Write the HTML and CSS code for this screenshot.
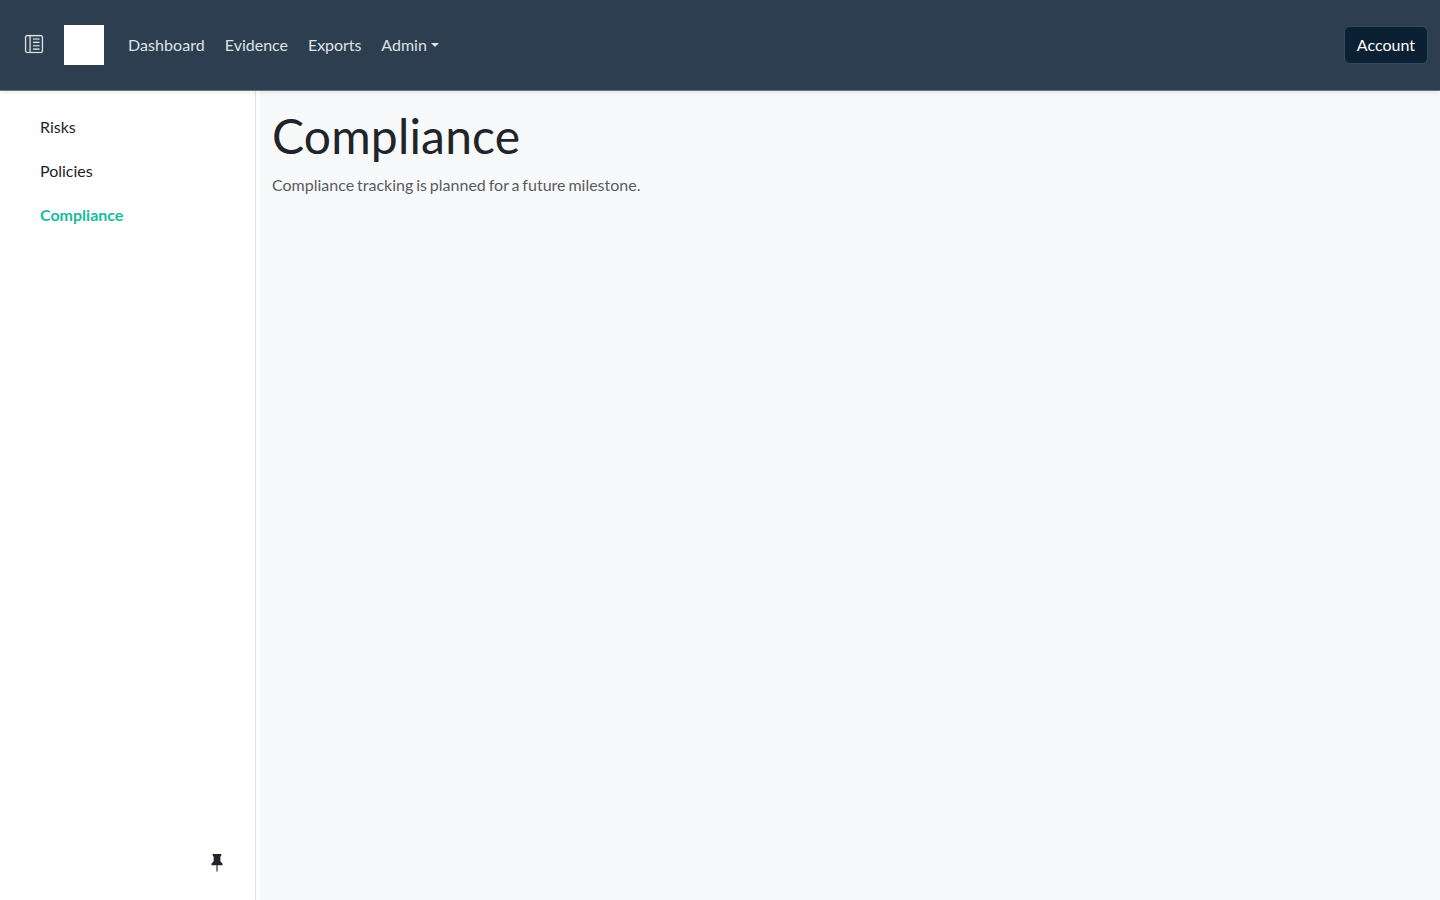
FILE: index.html
```html
<!DOCTYPE html>
<html lang="en">
<head>
<meta charset="utf-8">
<title>Compliance</title>
<link rel="stylesheet" href="styles.css">
</head>
<body>
<header class="navbar">
  <button class="sidebar-toggle" aria-label="Toggle sidebar">
    <svg class="icon" viewBox="0 0 16 16" fill="currentColor"><path d="M12.5 3a.5.5 0 0 1 0 1h-5a.5.5 0 0 1 0-1zm0 3a.5.5 0 0 1 0 1h-5a.5.5 0 0 1 0-1zm.5 3.5a.5.5 0 0 0-.5-.5h-5a.5.5 0 0 0 0 1h5a.5.5 0 0 0 .5-.5m-.5 2.5a.5.5 0 0 1 0 1h-5a.5.5 0 0 1 0-1z"/><path d="M16 2a2 2 0 0 0-2-2H2a2 2 0 0 0-2 2v12a2 2 0 0 0 2 2h12a2 2 0 0 0 2-2zM4 1v14H2a1 1 0 0 1-1-1V2a1 1 0 0 1 1-1zm1 0h9a1 1 0 0 1 1 1v12a1 1 0 0 1-1 1H5z"/></svg>
  </button>
  <a class="brand" href="#" aria-label="Home"></a>
  <nav class="nav">
    <a href="#">Dashboard</a>
    <a href="#">Evidence</a>
    <a href="#">Exports</a>
    <a class="dropdown" href="#">Admin</a>
  </nav>
  <button class="account">Account</button>
</header>
<div class="layout">
  <aside class="sidebar">
    <nav class="side-nav">
      <a href="#">Risks</a>
      <a href="#">Policies</a>
      <a class="active" href="#">Compliance</a>
    </nav>
    <button class="pin" aria-label="Pin sidebar">
      <svg class="icon" viewBox="0 0 16 16" fill="currentColor"><path d="M4.146.146A.5.5 0 0 1 4.5 0h7a.5.5 0 0 1 .5.5c0 .68-.342 1.174-.646 1.479-.126.125-.25.224-.354.298v4.431l.078.048c.203.127.476.314.751.555C12.36 7.775 13 8.527 13 9.5a.5.5 0 0 1-.5.5h-4v4.5c0 .276-.224 1.5-.5 1.5s-.5-1.224-.5-1.5V10h-4a.5.5 0 0 1-.5-.5c0-.973.64-1.725 1.17-2.189A6 6 0 0 1 5 6.708V2.277a3 3 0 0 1-.354-.298C4.342 1.674 4 1.179 4 .5a.5.5 0 0 1 .146-.354"/></svg>
    </button>
  </aside>
  <main class="content">
    <h1>Compliance</h1>
    <p>Compliance tracking is planned for a future milestone.</p>
  </main>
</div>
</body>
</html>
```

FILE: styles.css
```css
* { box-sizing: border-box; }

body {
  margin: 0;
  height: 100vh;
  display: flex;
  flex-direction: column;
  overflow: hidden;
  font: 400 16px/24px Lato, sans-serif;
  color: #212529;
  background: #fff;
}

a { color: inherit; text-decoration: none; }

button {
  margin: 0;
  padding: 0;
  border: 0;
  background: none;
  font: inherit;
  color: inherit;
}

.icon { display: block; width: 18px; height: 18px; }

.navbar {
  position: relative;
  z-index: 1;
  flex: none;
  display: flex;
  align-items: center;
  height: 91px;
  padding: 0 12px 0 25px;
  background: #2c3e50;
  border-bottom: 1px solid #6c7a80;
  box-shadow: 0 2px 4px rgba(0, 0, 0, .075);
}

.sidebar-toggle { color: #dee2e6; padding-bottom: 2px; }

.sidebar-toggle .icon { stroke: currentColor; stroke-width: .2; overflow: visible; }

.brand {
  width: 40px;
  height: 40px;
  margin: 0 24px 0 21px;
  background: #fff;
}

.nav { display: flex; gap: 20px; color: #dee2e6; }

.nav a:first-child { letter-spacing: .06px; }

.nav a:nth-child(3) { letter-spacing: -.06px; }

.dropdown::after {
  content: "";
  display: inline-block;
  margin-left: 4px;
  vertical-align: 4px;
  border-top: 4.8px solid;
  border-left: 4.8px solid transparent;
  border-right: 4.8px solid transparent;
}

.account {
  margin-left: auto;
  padding: 6px 12px;
  border: 1px solid #34495e;
  border-radius: 6px;
  background: #0b2033;
  color: #fff;
}

.layout { flex: 1; display: flex; gap: 4px; min-height: 0; }

.sidebar {
  flex: none;
  width: 256px;
  display: flex;
  flex-direction: column;
  justify-content: space-between;
  padding: 24px 29px 28px 40px;
  border-right: 1px solid #dee2e6;
}

.side-nav { display: flex; flex-direction: column; gap: 20px; }

.active { color: #18bc9c; font-weight: 700; }

.pin { align-self: flex-end; }

.content { flex: 1; padding: 16px 12px; background: #f8f9fb; }

.content h1 {
  margin: 0 0 8px;
  font-size: 48px;
  font-weight: 400;
  line-height: 58px;
  letter-spacing: .18px;
}

.content p { margin: 0; color: #595c5f; word-spacing: -1.2px; }
```
